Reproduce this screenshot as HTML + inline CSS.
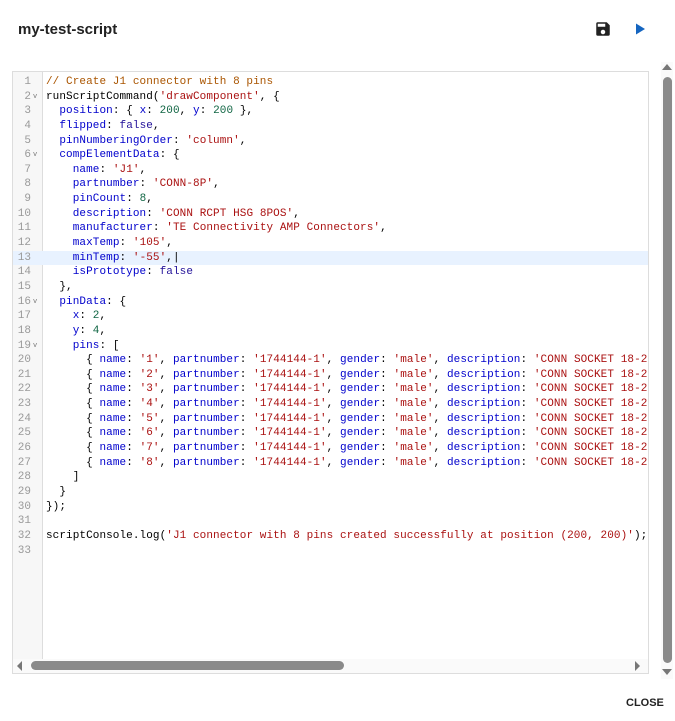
<!DOCTYPE html>
<html><head><style>
body{margin:0;width:675px;height:721px;background:#fff;position:relative;overflow:hidden;font-family:"Liberation Sans",sans-serif}
.title{position:absolute;left:18px;top:21px;font-size:15px;font-weight:bold;color:#222}
.ed{position:absolute;left:12px;top:71px;width:635px;height:601px;border:1px solid #ddd;overflow:hidden;background:#fff}
.gut{position:absolute;left:0;top:0;width:29px;height:100%;background:#f7f7f7;border-right:1px solid #ddd}
.lines{position:absolute;left:0;top:3px;width:100%;font-family:"Liberation Mono",monospace;font-size:11px}
.l{height:14.65px;line-height:14.65px;white-space:pre;position:relative}
.l .g{position:absolute;left:0;width:18px;text-align:right;color:#999}
.l .g i{position:absolute;left:20px;font-style:normal;font-size:7px;color:#777}
.l .t{position:absolute;left:33px;color:#000;letter-spacing:0.08px}
.hl{background:#e8f2ff}
.c{color:#a50}.p{color:#00c}.s{color:#a11}.n{color:#164}.a{color:#219}
.hs{position:absolute;left:0;bottom:0;width:100%;height:14px;background:#fafafa}
.hth{position:absolute;left:18px;top:2px;width:313px;height:9px;border-radius:5px;background:#8a8a8a}
.vs{position:absolute;left:661px;top:62px;width:12px;height:617px;background:#fafafa}
.vth{position:absolute;left:2px;top:15px;width:9px;height:586px;border-radius:5px;background:#8a8a8a}
.close{position:absolute;left:626px;top:697px;font-size:11px;font-weight:bold;letter-spacing:0;color:#222}
</style></head><body>
<div class="title">my-test-script</div>
<svg style="position:absolute;left:594px;top:20px" width="18" height="18" viewBox="0 0 24 24"><path fill="#222" d="M17 3H5a2 2 0 0 0-2 2v14a2 2 0 0 0 2 2h14a2 2 0 0 0 2-2V7l-4-4zm-5 16a3 3 0 1 1 0-6 3 3 0 0 1 0 6zm3-10H5V5h10v4z"/></svg>
<svg style="position:absolute;left:633px;top:22px" width="14" height="14" viewBox="0 0 14 14"><path fill="#1565c0" d="M3 1.5v11l9-5.5z"/></svg>
<div class="ed"><div class="gut"></div><div class="lines">
<div class="l"><span class="g">1</span><span class="t"><span class="c">// Create J1 connector with 8 pins</span></span></div>
<div class="l"><span class="g">2<i>v</i></span><span class="t">runScriptCommand(<span class="s">'drawComponent'</span>, {</span></div>
<div class="l"><span class="g">3</span><span class="t">  <span class="p">position</span>: { <span class="p">x</span>: <span class="n">200</span>, <span class="p">y</span>: <span class="n">200</span> },</span></div>
<div class="l"><span class="g">4</span><span class="t">  <span class="p">flipped</span>: <span class="a">false</span>,</span></div>
<div class="l"><span class="g">5</span><span class="t">  <span class="p">pinNumberingOrder</span>: <span class="s">'column'</span>,</span></div>
<div class="l"><span class="g">6<i>v</i></span><span class="t">  <span class="p">compElementData</span>: {</span></div>
<div class="l"><span class="g">7</span><span class="t">    <span class="p">name</span>: <span class="s">'J1'</span>,</span></div>
<div class="l"><span class="g">8</span><span class="t">    <span class="p">partnumber</span>: <span class="s">'CONN-8P'</span>,</span></div>
<div class="l"><span class="g">9</span><span class="t">    <span class="p">pinCount</span>: <span class="n">8</span>,</span></div>
<div class="l"><span class="g">10</span><span class="t">    <span class="p">description</span>: <span class="s">'CONN RCPT HSG 8POS'</span>,</span></div>
<div class="l"><span class="g">11</span><span class="t">    <span class="p">manufacturer</span>: <span class="s">'TE Connectivity AMP Connectors'</span>,</span></div>
<div class="l"><span class="g">12</span><span class="t">    <span class="p">maxTemp</span>: <span class="s">'105'</span>,</span></div>
<div class="l hl"><span class="g">13</span><span class="t">    <span class="p">minTemp</span>: <span class="s">'-55'</span>,|</span></div>
<div class="l"><span class="g">14</span><span class="t">    <span class="p">isPrototype</span>: <span class="a">false</span></span></div>
<div class="l"><span class="g">15</span><span class="t">  },</span></div>
<div class="l"><span class="g">16<i>v</i></span><span class="t">  <span class="p">pinData</span>: {</span></div>
<div class="l"><span class="g">17</span><span class="t">    <span class="p">x</span>: <span class="n">2</span>,</span></div>
<div class="l"><span class="g">18</span><span class="t">    <span class="p">y</span>: <span class="n">4</span>,</span></div>
<div class="l"><span class="g">19<i>v</i></span><span class="t">    <span class="p">pins</span>: [</span></div>
<div class="l"><span class="g">20</span><span class="t">      { <span class="p">name</span>: <span class="s">'1'</span>, <span class="p">partnumber</span>: <span class="s">'1744144-1'</span>, <span class="p">gender</span>: <span class="s">'male'</span>, <span class="p">description</span>: <span class="s">'CONN SOCKET 18-22AWG'</span></span></div>
<div class="l"><span class="g">21</span><span class="t">      { <span class="p">name</span>: <span class="s">'2'</span>, <span class="p">partnumber</span>: <span class="s">'1744144-1'</span>, <span class="p">gender</span>: <span class="s">'male'</span>, <span class="p">description</span>: <span class="s">'CONN SOCKET 18-22AWG'</span></span></div>
<div class="l"><span class="g">22</span><span class="t">      { <span class="p">name</span>: <span class="s">'3'</span>, <span class="p">partnumber</span>: <span class="s">'1744144-1'</span>, <span class="p">gender</span>: <span class="s">'male'</span>, <span class="p">description</span>: <span class="s">'CONN SOCKET 18-22AWG'</span></span></div>
<div class="l"><span class="g">23</span><span class="t">      { <span class="p">name</span>: <span class="s">'4'</span>, <span class="p">partnumber</span>: <span class="s">'1744144-1'</span>, <span class="p">gender</span>: <span class="s">'male'</span>, <span class="p">description</span>: <span class="s">'CONN SOCKET 18-22AWG'</span></span></div>
<div class="l"><span class="g">24</span><span class="t">      { <span class="p">name</span>: <span class="s">'5'</span>, <span class="p">partnumber</span>: <span class="s">'1744144-1'</span>, <span class="p">gender</span>: <span class="s">'male'</span>, <span class="p">description</span>: <span class="s">'CONN SOCKET 18-22AWG'</span></span></div>
<div class="l"><span class="g">25</span><span class="t">      { <span class="p">name</span>: <span class="s">'6'</span>, <span class="p">partnumber</span>: <span class="s">'1744144-1'</span>, <span class="p">gender</span>: <span class="s">'male'</span>, <span class="p">description</span>: <span class="s">'CONN SOCKET 18-22AWG'</span></span></div>
<div class="l"><span class="g">26</span><span class="t">      { <span class="p">name</span>: <span class="s">'7'</span>, <span class="p">partnumber</span>: <span class="s">'1744144-1'</span>, <span class="p">gender</span>: <span class="s">'male'</span>, <span class="p">description</span>: <span class="s">'CONN SOCKET 18-22AWG'</span></span></div>
<div class="l"><span class="g">27</span><span class="t">      { <span class="p">name</span>: <span class="s">'8'</span>, <span class="p">partnumber</span>: <span class="s">'1744144-1'</span>, <span class="p">gender</span>: <span class="s">'male'</span>, <span class="p">description</span>: <span class="s">'CONN SOCKET 18-22AWG'</span></span></div>
<div class="l"><span class="g">28</span><span class="t">    ]</span></div>
<div class="l"><span class="g">29</span><span class="t">  }</span></div>
<div class="l"><span class="g">30</span><span class="t">});</span></div>
<div class="l"><span class="g">31</span><span class="t"></span></div>
<div class="l"><span class="g">32</span><span class="t">scriptConsole.log(<span class="s">'J1 connector with 8 pins created successfully at position (200, 200)'</span>);</span></div>
<div class="l"><span class="g">33</span><span class="t"></span></div>
</div>
<div class="hs"><div class="hth"></div>
<svg style="position:absolute;left:4px;top:2px" width="6" height="10"><path fill="#777" d="M5 0v10L0 5z"/></svg>
<svg style="position:absolute;left:622px;top:2px" width="6" height="10"><path fill="#777" d="M0 0v10l5-5z"/></svg></div>
</div>
<div class="vs"><div class="vth"></div>
<svg style="position:absolute;left:1px;top:2px" width="10" height="6"><path fill="#777" d="M0 6h10L5 0z"/></svg>
<svg style="position:absolute;left:1px;top:607px" width="10" height="6"><path fill="#777" d="M0 0h10L5 6z"/></svg></div>
<div class="close">CLOSE</div>
</body></html>
